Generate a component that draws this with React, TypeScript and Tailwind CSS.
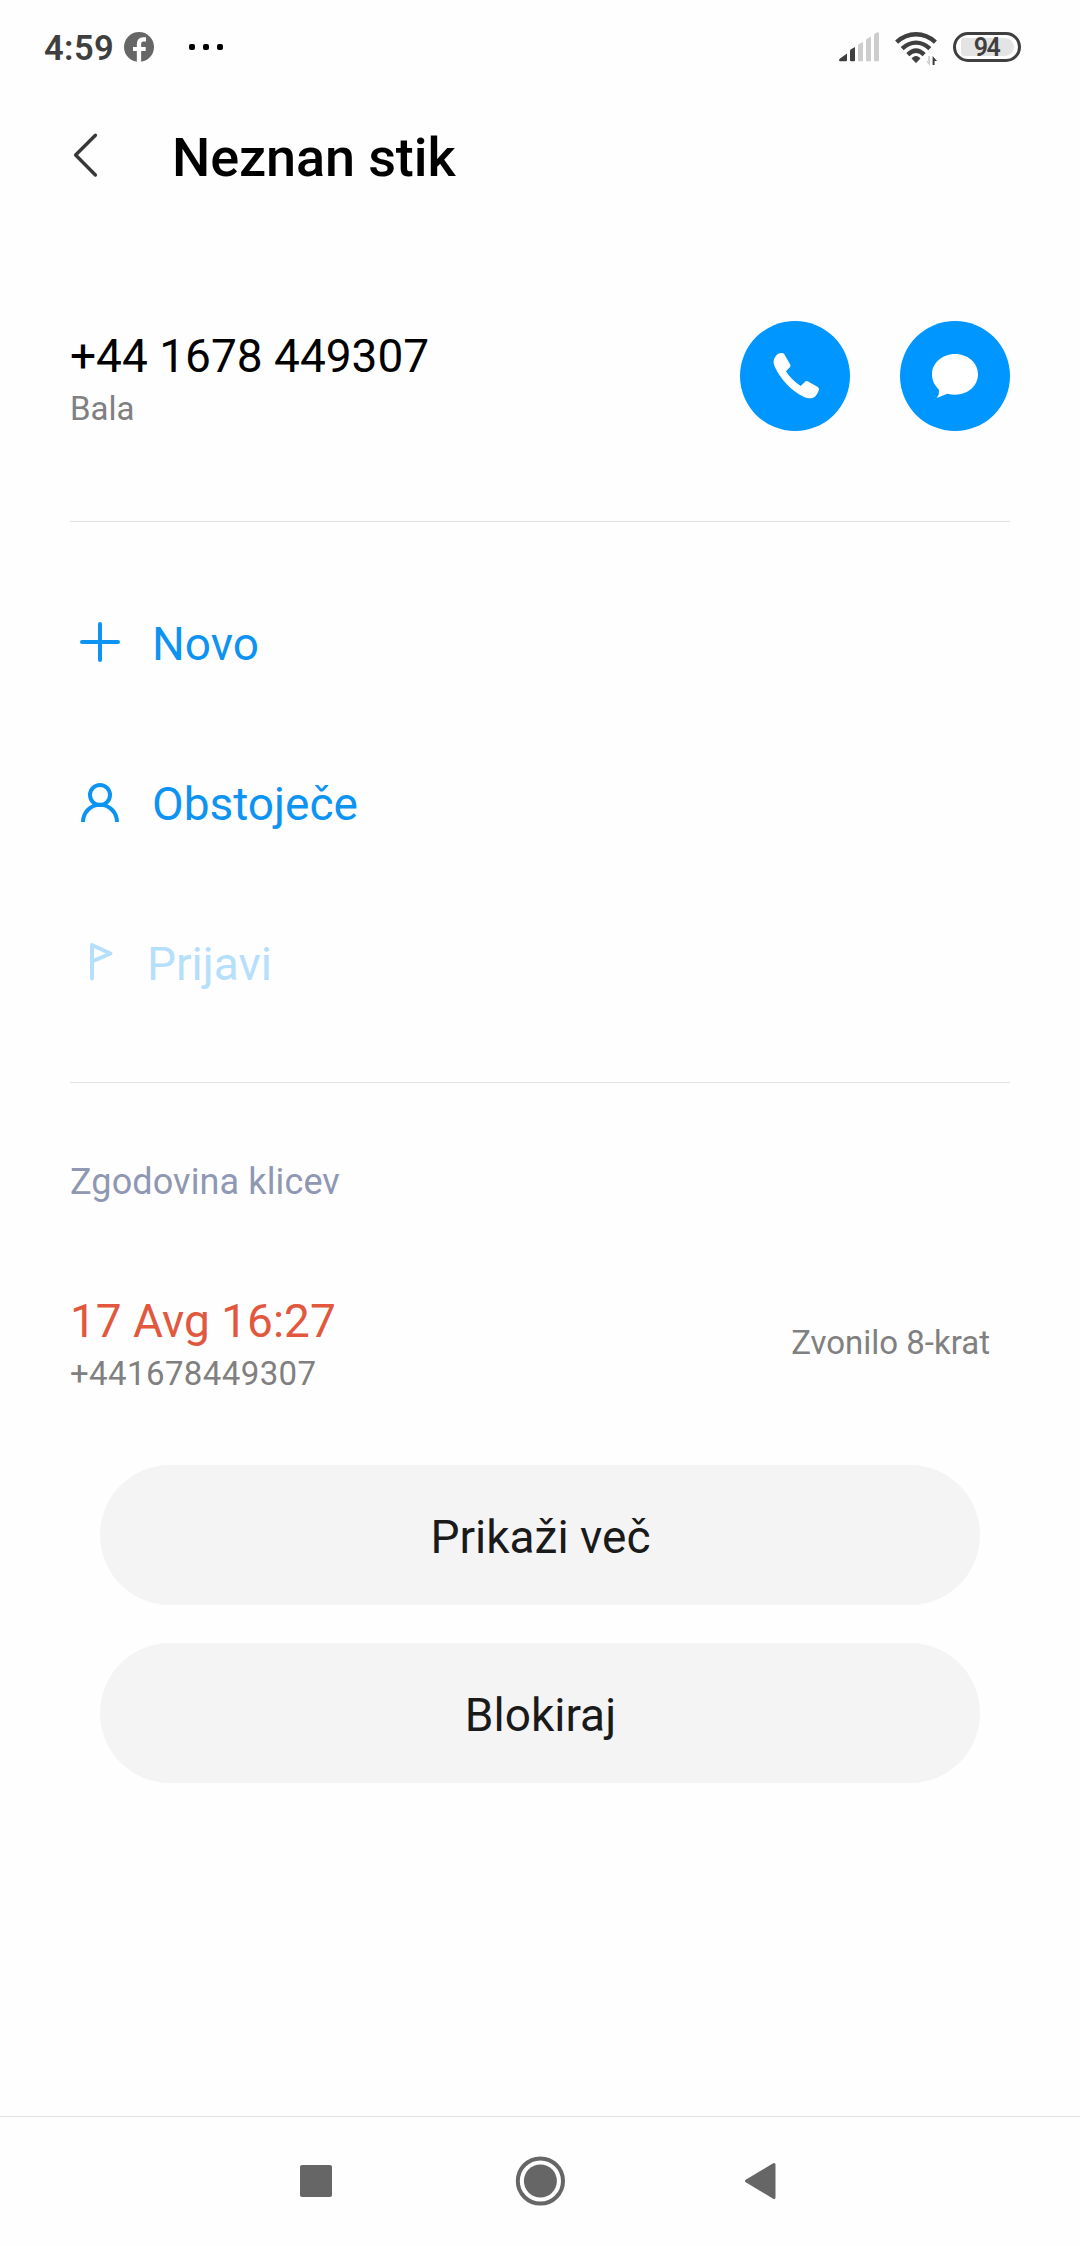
import React from "react";

function FacebookIcon() {
  return (
    <svg width="30" height="30" viewBox="0 0 90 90" className="-mt-0.5 block">
      <circle cx="45" cy="45" r="45" fill="#666666" />
      <path d="M45 90 V37 Q45 22 58 22 H66" fill="none" stroke="#fefefe" strokeWidth="13" />
      <path d="M27 51 H65" fill="none" stroke="#fefefe" strokeWidth="12" />
    </svg>
  );
}

function SignalIcon() {
  return (
    <svg width="40" height="30" viewBox="0 0 40 30" className="block">
      <path d="M1 26.5 L8 21.5 V28 Q8 29.2 7 29.2 H1 Q0 29.2 0 28 Z" fill="#3f3f3f" />
      <path d="M11 19 Q11 17.8 12 17.3 L16 15 V28 Q16 29.2 15 29.2 H12 Q11 29.2 11 28 Z" fill="#3f3f3f" />
      <path d="M19 13.6 Q19 12.6 20 12 L24 10 V29.2 H20 Q19 29.2 19 28 Z" fill="#cdcdcd" />
      <path d="M27 8.2 Q27 7.2 28 6.7 L32 4.6 V29.2 H28 Q27 29.2 27 28 Z" fill="#cdcdcd" />
      <path d="M35 3 Q35 2 36 1.5 L38.5 0.2 Q40 0 40 1.4 V28 Q40 29.2 39 29.2 H36 Q35 29.2 35 28 Z" fill="#cdcdcd" />
    </svg>
  );
}

function WifiIcon() {
  return (
    <svg width="44" height="34" viewBox="0 0 44 34" className="block">
      <g fill="none" stroke="#3f3f3f" strokeWidth="4.4">
        <path d="M1.6 10.2 C13 -0.4 29 -0.4 40.4 10.2" />
        <path d="M7.2 16.6 C15.8 8.6 26.2 8.6 34.8 16.6" />
        <path d="M12.8 22.6 C18.2 17.4 23.8 17.4 29.2 22.6" />
      </g>
      <path d="M17 26.4 Q21 22.6 25 26.4 L21 30.6 Z" fill="#3f3f3f" stroke="#3f3f3f" strokeLinejoin="round" />
      <path d="M35 24 V34 L31.2 29.3 H33.2 V24 Z" fill="#cdcdcd" />
      <path d="M37.6 33 V24 L42 29 H39.6 V33 Z" fill="#3f3f3f" />
    </svg>
  );
}

function StatusBar() {
  return (
    <div className="flex h-24 items-center justify-between pl-11 pr-[59px]">
      <div className="flex items-center">
        <span className="w-20 text-[34.5px] leading-[40px] font-semibold tracking-[0.4px] text-[#3f3f3f]">4:59</span>
        <FacebookIcon />
        <div className="-mt-0.5 ml-[35px] flex gap-2">
          <i className="size-1.5 rounded-[2px] bg-black" />
          <i className="size-1.5 rounded-[2px] bg-black" />
          <i className="size-1.5 rounded-[2px] bg-black" />
        </div>
      </div>
      <div className="-mt-0.5 flex items-start">
        <SignalIcon />
        <div className="ml-4 -mb-1">
          <WifiIcon />
        </div>
        <div className="ml-[14px] flex h-[30px] w-[68px] items-center justify-center rounded-full border-[3px] border-[#3f3f3f]">
          <div className="flex h-[18px] w-[53px] items-center justify-center rounded-l-[3px] rounded-r-[9px] bg-[#e4e4e4] pt-0.5 pr-px">
            <span className="text-[25px] leading-[18px] font-semibold tracking-[-1.6px] text-[#3f3f3f]">94</span>
          </div>
        </div>
      </div>
    </div>
  );
}

function PhoneButton() {
  return (
    <button aria-label="Call" className="size-[110px] rounded-full bg-[#0096ff]">
      <svg viewBox="60 63 330 330" className="size-[110px]" fill="#fff">
        <path d="M173 162 Q188 155 193 163 L211 194 Q213 198 210 201 L198 214 Q212 238 242 258 L255 245 Q259 242 263 244 L292 260 Q298 263 297 269 Q292 284 284 291 Q275 297 258 293 C222 281 173 232 161 190 Q159 174 173 162 Z" />
      </svg>
    </button>
  );
}

function MessageButton() {
  return (
    <button aria-label="Message" className="size-[110px] rounded-full bg-[#0096ff]">
      <svg viewBox="540 63 330 330" className="size-[110px]" fill="#fff">
        <path d="M705 162 C745 162 774 190 774 223 C774 257 745 284 705 284 Q693 284 682 281 Q668 286 650 294 Q660 281 656 268 C643 256 636 240 636 223 C636 190 666 162 705 162 Z" />
      </svg>
    </button>
  );
}

function Action({ label, labelClass, children }: { label: string; labelClass: string; children: React.ReactNode }) {
  return (
    <div className="flex h-40 items-center">
      <svg width="60" height="60" viewBox="0 0 60 60" fill="none" stroke="currentColor" strokeWidth="4" className="-mt-1">
        {children}
      </svg>
      <span className={labelClass}>{label}</span>
    </div>
  );
}

const actionLabel = "ml-[22px] text-[46px] leading-[54px]";

export default function App() {
  return (
    <div className="flex h-[2246px] w-[1080px] flex-col bg-[#fefefe] font-['Roboto',sans-serif]">
      <StatusBar />
      <header className="flex h-[123px] items-center pl-[72px]">
        <svg width="27" height="46" viewBox="0 0 27 46" fill="none" stroke="#383838" strokeWidth="3.4" strokeLinecap="round" strokeLinejoin="round" className="-mt-[5px]">
          <path d="M23.4 3.2 L3.6 23 L23.4 43" />
        </svg>
        <h1 className="ml-[73px] text-[54px] leading-[64px] font-medium tracking-[-0.12px] text-black">Neznan stik</h1>
      </header>

      <main className="flex grow flex-col px-[70px]">
        <section className="mt-3 flex h-[290px] items-center justify-between">
          <div className="mt-[5px]">
            <p className="text-[46px] leading-[54px] text-black">+44 1678 449307</p>
            <p className="mt-1.5 text-[33px] leading-[40px] text-[#808080]">Bala</p>
          </div>
          <div className="flex gap-[50px]">
            <PhoneButton />
            <MessageButton />
          </div>
        </section>
        <div className="h-px bg-[#e2e2e2]" />

        <section className="mt-[42px] mb-[38px] text-[#0d93f2]">
          <Action label="Novo" labelClass={actionLabel}>
            <path d="M30 12 V48 M12 30 H48" strokeLinecap="round" />
          </Action>
          <Action label="Obstoječe" labelClass={actionLabel}>
            <circle cx="30" cy="23" r="10" />
            <path d="M13 50 A17 17.3 0 0 1 47 50" />
          </Action>
          <div className="text-[#b6dffb]">
            <Action label="Prijavi" labelClass="ml-[17px] text-[46px] leading-[54px]">
              <path d="M22 46.5 V13 L40.5 21.5 L22 29.5" strokeLinecap="round" strokeLinejoin="round" strokeWidth="4" />
            </Action>
          </div>
        </section>
        <div className="h-px bg-[#e2e2e2]" />

        <h2 className="mt-[75px] text-[36px] leading-[48px] tracking-[0.12px] text-[#8f97b3]">Zgodovina klicev</h2>
        <section className="mt-[88px] flex items-center justify-between pr-5">
          <div>
            <p className="text-[46px] leading-[54px] text-[#e2583e]">17 Avg 16:27</p>
            <p className="mt-1.5 text-[33px] leading-[40px] tracking-[0.4px] text-[#808080]">+441678449307</p>
          </div>
          <span className="mb-0.5 text-[33px] leading-[40px] text-[#808080]">Zvonilo 8-krat</span>
        </section>

        <div className="mt-[71px] flex flex-col gap-[38px] px-[30px] text-[46px] leading-[54px] text-[#1a1a1a]">
          <button className="h-[140px] rounded-full bg-[#f4f4f4] pt-[3px] pl-px">Prikaži več</button>
          <button className="h-[140px] rounded-full bg-[#f4f4f4] pt-[3px] pl-px">Blokiraj</button>
        </div>
      </main>

      <nav className="flex h-[130px] items-center border-t border-[#e2e2e2] pb-px pl-[300px]">
        <div className="size-8 rounded-[2px] bg-[#666666]" />
        <svg width="50" height="50" viewBox="0 0 50 50" className="ml-[183px]">
          <circle cx="25.4" cy="25" r="22.6" fill="none" stroke="#666666" strokeWidth="4" />
          <circle cx="25.4" cy="25" r="16.5" fill="#666666" />
        </svg>
        <svg width="32" height="38" viewBox="0 0 32 38" className="ml-[179px]">
          <path d="M2.5 19 L30 2.5 V35.5 Z" fill="#666666" stroke="#666666" strokeWidth="3" strokeLinejoin="round" />
        </svg>
      </nav>
    </div>
  );
}
